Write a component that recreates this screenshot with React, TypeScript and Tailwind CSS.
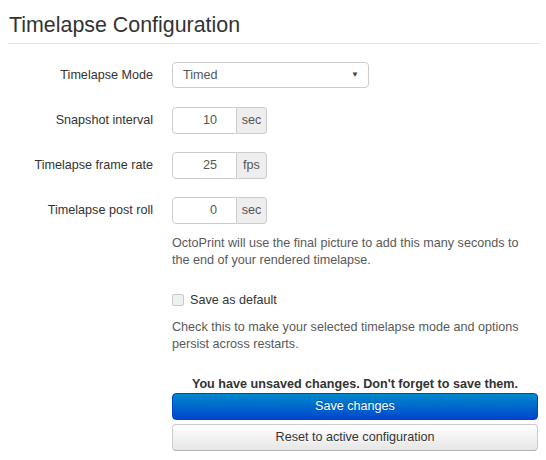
import React from "react";

function Row({ label, children }: { label: string; children: React.ReactNode }) {
  return (
    <div className="flex items-start">
      <div className="w-[153px] shrink-0 text-right h-[27px] leading-[27px]">{label}</div>
      <div className="ml-[19px]">{children}</div>
    </div>
  );
}

function AddonInput({ value, unit }: { value: string; unit: string }) {
  return (
    <div className="flex h-[27px]">
      <div className="w-[65px] h-full border border-[#cccccc] rounded-l-[4px] bg-white text-right pr-[19px] leading-[25px] text-[#555]">
        {value}
      </div>
      <div className="w-[30px] h-full border border-l-0 border-[#cccccc] rounded-r-[4px] bg-[#eeeeee] text-center leading-[25px] text-[#555]">
        {unit}
      </div>
    </div>
  );
}

export default function App() {
  return (
    <div
      className="w-[546px] h-[460px] bg-white text-[#333] text-[12.6px] overflow-hidden"
      style={{ fontFamily: '"Liberation Sans", Arial, sans-serif' }}
    >
      <div className="ml-[8px] w-[532px] h-[44px] border-b border-[#e5e5e5] text-[21.4px] leading-[50px] pl-[1px]">
        Timelapse Configuration
      </div>
      <div className="mt-[18px] flex flex-col gap-[18px]">
        <div className="flex items-center">
          <div className="w-[153px] shrink-0 text-right">Timelapse Mode</div>
          <div className="ml-[19px] w-[197px] h-[26px] border border-[#cccccc] rounded-[4px] bg-white flex items-center justify-between pl-[10px] pr-[9px] text-[#555]">
            <span>Timed</span>
            <span className="text-[8px] text-[#444]">▼</span>
          </div>
        </div>
        <div className="mt-[1px]">
          <Row label="Snapshot interval">
            <AddonInput value="10" unit="sec" />
          </Row>
        </div>
        <Row label="Timelapse frame rate">
          <AddonInput value="25" unit="fps" />
        </Row>
        <Row label="Timelapse post roll">
          <AddonInput value="0" unit="sec" />
          <div className="mt-[11px] w-[366px] leading-[17px] text-[#595959]">
            OctoPrint will use the final picture to add this many seconds to the end of your rendered timelapse.
          </div>
        </Row>
      </div>
      <div className="ml-[172px] w-[366px]">
        <div className="mt-[22px] flex items-center h-[18px]">
          <div className="w-[12px] h-[12px] border border-[#c8c8c8] rounded-[2px] bg-[#f0f0f0]" />
          <span className="ml-[6px]">Save as default</span>
        </div>
        <div className="mt-[10px] leading-[17px] text-[#595959]">
          Check this to make your selected timelapse mode and options persist across restarts.
        </div>
        <div className="mt-[22px] leading-[18px] font-bold text-center">
          You have unsaved changes. Don't forget to save them.
        </div>
        <div className="mt-[0px] h-[27px] rounded-[4px] border border-[#0044cc] bg-gradient-to-b from-[#0088cc] to-[#0044cc] text-white text-center leading-[25px] [text-shadow:0_-1px_0_rgba(0,0,0,0.25)]">
          Save changes
        </div>
        <div className="mt-[4px] h-[27px] rounded-[4px] border border-[#cccccc] border-b-[#b3b3b3] bg-gradient-to-b from-white to-[#e6e6e6] text-[#333] text-center leading-[25px] [text-shadow:0_1px_1px_rgba(255,255,255,0.75)]">
          Reset to active configuration
        </div>
      </div>
    </div>
  );
}
